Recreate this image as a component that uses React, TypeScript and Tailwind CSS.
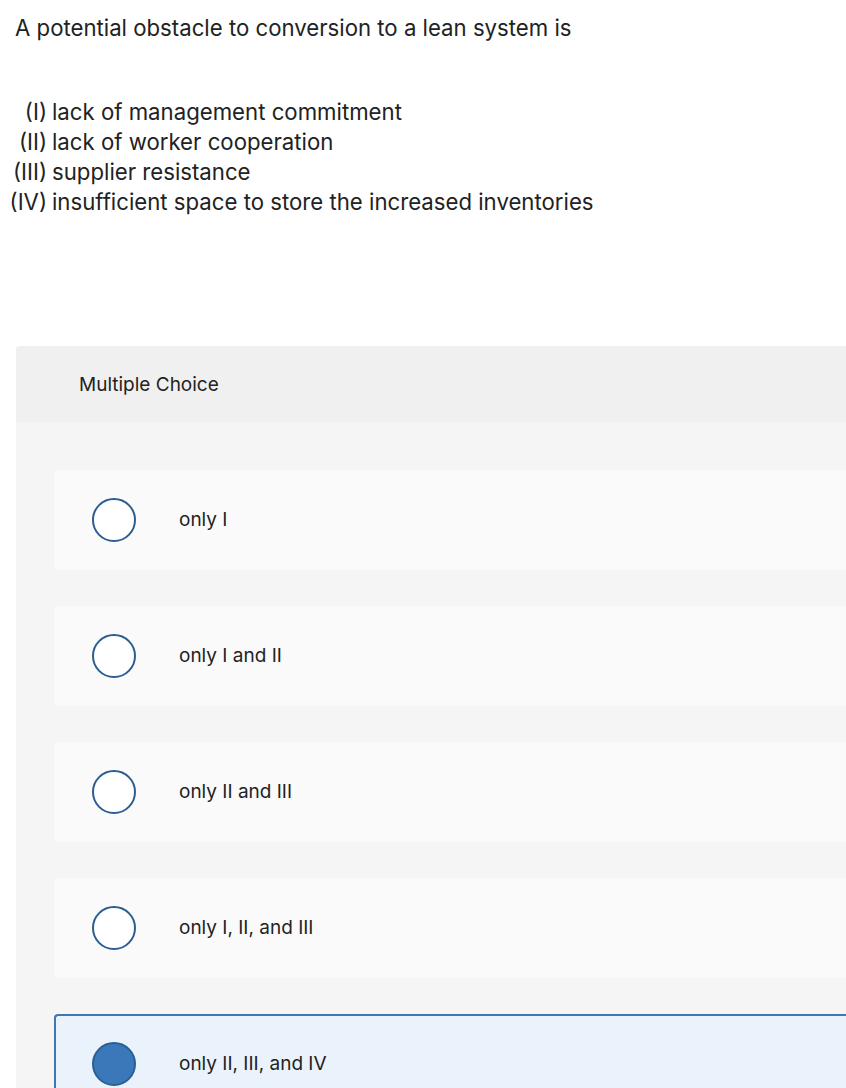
import React from 'react';

const items = [
  { marker: '(I)', text: 'lack of management commitment' },
  { marker: '(II)', text: 'lack of worker cooperation' },
  { marker: '(III)', text: 'supplier resistance' },
  { marker: '(IV)', text: 'insufficient space to store the increased inventories' },
];

const choices = [
  { label: 'only I', selected: false },
  { label: 'only I and II', selected: false },
  { label: 'only II and III', selected: false },
  { label: 'only I, II, and III', selected: false },
  { label: 'only II, III, and IV', selected: true },
];

export default function App() {
  return (
    <div className="w-[846px] h-[1088px] overflow-hidden bg-white text-[#222] font-['Inter','Liberation_Sans',sans-serif]">
      <p className="pl-[15px] pt-[13px] text-[22.2px] leading-[30px]">
        A potential obstacle to conversion to a lean system is
      </p>

      {/* statements */}
      <div className="mt-[54px] text-[22.2px] leading-[30px]">
        {items.map(item => (
          <div key={item.marker} className="flex">
            <span className="w-[47px] shrink-0 text-right">{item.marker}</span>
            <span className="pl-[5px]">{item.text}</span>
          </div>
        ))}
      </div>

      <div className="ml-[16px] mt-[129px] rounded-tl-[4px] bg-[#f5f5f5]">
        <div className="h-[76px] flex items-center pl-[63px] pt-[3px] bg-[#f0f0f0] rounded-tl-[4px] text-[19px]">
          Multiple Choice
        </div>
        <div className="pt-[48px] pl-[38px] flex flex-col gap-[36px]">
          {choices.map(choice => (
            <div
              key={choice.label}
              className={`h-[100px] flex items-center rounded-l-[4px] ${
                choice.selected
                  ? 'bg-[#eaf2fb] border-2 border-r-0 border-[#3b78b9] pl-[36px]'
                  : 'bg-[#fafafa] pl-[38px]'
              }`}
            >
              <div
                className={`w-[44px] h-[44px] rounded-full border-2 ${
                  choice.selected ? 'bg-[#3b78b9] border-[#2a5f95]' : 'bg-white border-[#2b5d90]'
                }`}
              />
              <span className="ml-[43px] text-[19px]">{choice.label}</span>
            </div>
          ))}
        </div>
      </div>
    </div>
  );
}
